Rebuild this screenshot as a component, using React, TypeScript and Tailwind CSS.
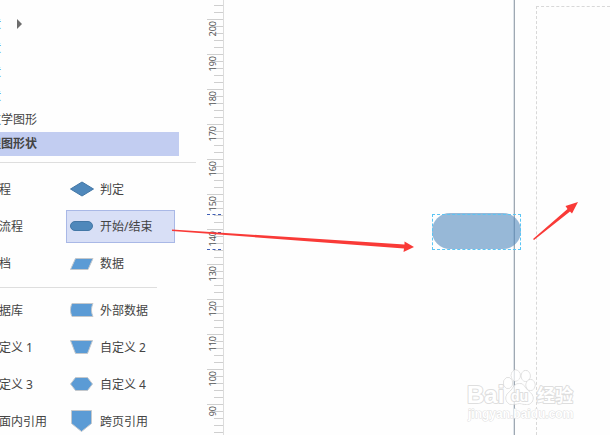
import clsx from 'clsx';
import type { ReactNode } from 'react';

const stencils = [
  { name: '更多形状', offset: '-ml-[47px] text-[#2f7fc0]', more: true },
  { name: '快速形状', offset: '-ml-[47px] text-[#2f7fc0]' },
  { name: '基本形状', offset: '-ml-[47px] text-[#2f7fc0]' },
  { name: '箭头形状', offset: '-ml-[47px] text-[#2f7fc0]' },
  { name: '数学图形', offset: '-ml-[11px]' },
  { name: '程图形状', offset: '-ml-[11px]', active: true },
];

const DARK = { fill: '#4f88bb', stroke: '#4377a6' };
const LIGHT = { fill: '#5b9bd5', stroke: '#c4c8cc' };

const basicShapes = [
  { left: '流程', name: '判定', icon: <path d="M.5 11 12 4l11.500 7L12 18z" {...DARK} /> },
  { left: '子流程', name: '开始/结束', icon: <rect x="0.5" y="6.5" width="22" height="9" rx="4.5" {...DARK} />, selected: true },
  { left: '文档', name: '数据', icon: <path d="M5.500 6.500h17.500l-5 11H.5z" {...LIGHT} /> },
];

const moreShapes = [
  { left: '数据库', name: '外部数据', icon: <path d="M2 4.500h21c-2 4-2 9 0 13H2c-2-4-2-9 0-13z" {...LIGHT} /> },
  { left: '自定义 1', name: '自定义 2', icon: <path d="M.5 4.500h22l-5 13h-12z" {...LIGHT} /> },
  { left: '自定义 3', name: '自定义 4', icon: <path d="M5.500 4.500h12l5 6.500-5 6.500h-12L.5 11z" {...LIGHT} /> },
  { left: '页面内引用', name: '跨页引用', icon: <path d="M1.500.5h20v13l-10 8-10-8z" {...LIGHT} /> },
];

const rulerMarks = [200, 190, 180, 170, 160, 150, 140, 130, 120, 110, 100, 90];

type Shape = { left: string; name: string; icon: ReactNode; selected?: boolean };

const ShapeList = ({ shapes }: { shapes: Shape[] }) => (
  <ul className="flex flex-col gap-1">
    {shapes.map((shape) => (
      <li key={shape.name} className="flex h-[33px]">
        <button className="w-[66px] text-left whitespace-nowrap">
          <span className="-ml-[13px]">{shape.left}</span>
        </button>
        <button
          className={clsx(
            'flex w-[109px] items-center gap-1.5 border pl-[3px] whitespace-nowrap',
            shape.selected ? 'border-[#a9b8e6] bg-[#d8dff6]' : 'border-transparent'
          )}
        >
          <svg width="24" height="24" viewBox="0 0 24 24">{shape.icon}</svg>
          {shape.name}
        </button>
      </li>
    ))}
  </ul>
);

const Sidebar = () => (
  <aside className="w-[207px] shrink-0 overflow-hidden pt-3">
    <ul>
      {stencils.map((item) => (
        <li key={item.name}>
          <button
            className={clsx(
              'flex h-6 w-[179px] items-center whitespace-nowrap',
              item.active && 'bg-[#c2cdf1] font-bold'
            )}
          >
            <span className={item.offset}>{item.name}</span>
            {item.more && (
              <svg className="ml-4" width="5" height="10" viewBox="0 0 5 10">
                <path d="M0 0v10l5-5z" fill="#6d6d6d" />
              </svg>
            )}
          </button>
        </li>
      ))}
    </ul>
    <div className="mt-1.5 mb-2.5 w-[196px] border-t border-[#dedede]" />
    <ShapeList shapes={basicShapes} />
    <div className="mt-[7px] mb-1.5 w-[157px] border-t border-[#dedede]" />
    <ShapeList shapes={moreShapes} />
  </aside>
);

const Tick = () => <div className="ml-auto h-[7px] w-[9px] border-t border-[#cfcfcf]" />;

const Ruler = () => (
  <div className="relative w-[17px] shrink-0 overflow-hidden border-r border-[#dcdcdc] pt-[5px]">
    <Tick />
    <Tick />
    {rulerMarks.map((mark) => (
      <div key={mark} className="relative h-[35px] border-t border-[#cfcfcf] pt-[6px]">
        <Tick />
        <Tick />
        <Tick />
        <Tick />
        <span className="absolute top-px left-0 rotate-180 font-['Noto_Sans'] text-[9px] leading-3 text-[#555] [writing-mode:vertical-rl]">
          {mark}
        </span>
      </div>
    ))}
    {/* extents of the selected shape */}
    <div className="absolute top-[214px] left-0 w-3.5 border-t border-dashed border-[#3f5fb5]" />
    <div className="absolute top-[232px] left-0 w-3.5 border-t border-dashed border-[#3f5fb5]" />
    <div className="absolute top-[249px] left-0 w-3.5 border-t border-dashed border-[#3f5fb5]" />
  </div>
);

const Watermark = () => (
  <svg
    className="absolute top-[366px] left-[464px]"
    width="120"
    height="60"
    viewBox="0 0 120 60"
    fill="#fff"
    stroke="#dedede"
    strokeWidth="2"
    strokeLinejoin="round"
    paintOrder="stroke"
    fontWeight="bold"
  >
    <text x="3" y="37" fontSize="24" fontFamily="Liberation Sans">Bai</text>
    <g strokeWidth="1" stroke="#d4d4d4" fillOpacity="0.7">
      <ellipse cx="44" cy="17" rx="4.500" ry="5.500" />
      <ellipse cx="51.700" cy="9.500" rx="4.500" ry="5.500" />
      <ellipse cx="61.700" cy="10" rx="4.500" ry="5.500" />
      <ellipse cx="66.500" cy="19" rx="4.500" ry="5.500" />
      <path d="M55.500 17.500c4 0 5 3 7 5.500s6.500 4.500 6.500 9-3 6.500-6.500 6.500c-3 0-4-1-7-1s-4 1-7 1c-4 0-6.500-2.500-6.500-6.500 0-4.500 4-6 6-9s3.500-5.500 7.500-5.500z" />
    </g>
    <text x="47" y="35" fontSize="14" fontFamily="Liberation Sans">du</text>
    <text x="73" y="36" fontSize="18" fontFamily="Noto Sans CJK SC">经验</text>
    <text x="4" y="52" fontSize="12" fontFamily="Liberation Sans" strokeWidth="1">jingyan.baidu.com</text>
  </svg>
);

const App = () => {
  return (
    <main className="relative flex h-screen overflow-hidden bg-[#fefefe] font-['Noto_Sans','Noto_Sans_CJK_SC',sans-serif] text-xs text-[#444]">
      <Sidebar />
      <Ruler />

      {/* canvas */}
      <section className="flex grow pl-[289px]">
        <div className="flex grow border-l border-[#dde3e9]">
          <div className="grow border-l border-[#9fa8b2] pt-1.5 pl-[21px]">
            <div className="h-full border-t border-l border-dashed border-[#d8d8d8]" />
          </div>
        </div>
      </section>

      {/* dropped shape */}
      <div className="absolute top-[213px] left-[432px] h-9 w-[89px] rounded-full bg-[#5189bc]/60" />
      <div className="absolute top-[214px] left-[432px] h-9 w-[89px] border border-dashed border-[#5bc5f5]" />

      <svg className="absolute top-[195px] left-[165px]" width="420" height="60" viewBox="0 0 420 60" fill="#f93a37">
        <path d="M7 34.500 239.500 49.500 239.500 46.500 249 52 238.500 57 239 53.500 7 36z" />
        <path d="M368 44 402.500 14 400.500 11 413 7 407 18.500 405 16.500 369 45z" />
      </svg>

      <Watermark />
    </main>
  );
};

export default App;
